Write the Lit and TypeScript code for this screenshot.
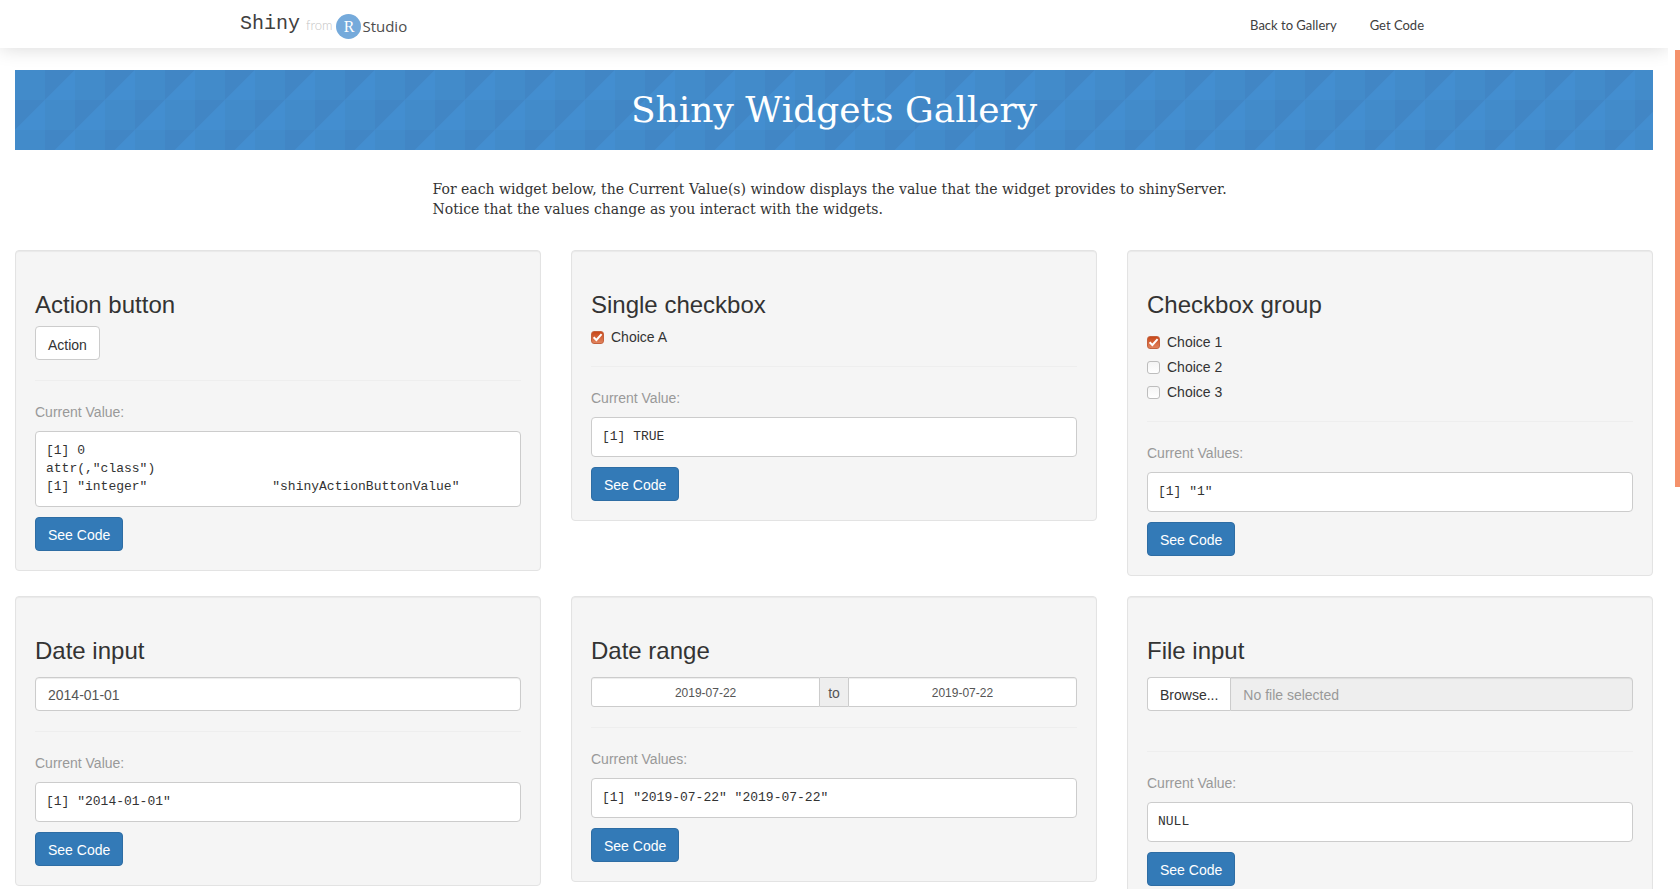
import { LitElement, html, css, svg, TemplateResult } from "lit";
import { customElement, property, state } from "lit/decorators.js";

const controls = css`
  *, *::before, *::after { box-sizing: border-box; }
  button, input { font: inherit; margin: 0; }
`;

@customElement("widget-card")
class WidgetCard extends LitElement {
  @property() heading = "";
  @property() caption = "Current Value:";
  @property() output = "";

  static styles = [controls, css`
    :host {
      display: block;
      box-sizing: border-box;
      min-width: 0;
      padding: 41px 19px 19px;
      border: 1px solid #e3e3e3;
      border-radius: 4px;
      background: #f5f5f5;
      box-shadow: inset 0 1px 1px rgba(0, 0, 0, 0.05);
    }
    .heading { margin: 0 0 8px; font-size: 24px; line-height: 26px; font-weight: 400; }
    .rule { height: 1px; margin: 20px 0 21px; border: 0; background: #eee; }
    .caption { margin: 0 0 9px; color: #999; }
    .output {
      margin: 0 0 10px;
      padding: 10px;
      border: 1px solid #ccc;
      border-radius: 4px;
      background: #fff;
      color: #333;
      font: 13px/18px "Liberation Mono", monospace;
      overflow: auto;
    }
    .code {
      height: 34px;
      padding: 2px 12px 0;
      border: 1px solid #2e6da4;
      border-radius: 4px;
      background: #337ab7;
      color: #fff;
      cursor: pointer;
    }
  `];

  render() {
    return html`
      <h3 class="heading">${this.heading}</h3>
      <slot></slot>
      <hr class="rule" />
      <p class="caption">${this.caption}</p>
      <pre class="output">${this.output}</pre>
      <button class="code" type="button">See Code</button>
    `;
  }
}

@customElement("app-root")
class AppRoot extends LitElement {
  @state() private clicks = 0;
  @state() private single = true;
  @state() private group = [true, false, false];
  @state() private date = "2014-01-01";
  @state() private from = "2019-07-22";
  @state() private to = "2019-07-22";

  static styles = [controls, css`
    :host {
      display: block;
      box-sizing: border-box;
      height: 100vh;
      padding-right: 12px;
      overflow-y: auto;
      scrollbar-width: none;
      background: #fff;
      color: #333;
      font: 14px/20px "Liberation Sans", Arial, sans-serif;
    }
    .topbar {
      background: #fff;
      box-shadow: 0 0 20px rgba(0, 0, 0, 0.16);
      clip-path: inset(0 0 -24px 0);
    }
    .topbar-inner {
      display: flex;
      justify-content: space-between;
      align-items: center;
      max-width: 1188px;
      height: 48px;
      margin: 0 auto;
      padding-right: 4px;
    }
    .brand { display: flex; align-items: center; color: #404040; text-decoration: none; }
    .shiny { font: 20px/24px "Liberation Mono", monospace; }
    .from { margin: 2px 4px 0 6px; color: #c4c4c4; font: 300 13px/20px Lato, sans-serif; }
    .badge { width: 25px; height: 25px; margin-top: 4px; }
    .badge-disc { fill: #75aadb; }
    .badge-letter { fill: #fff; font: 16px "Liberation Serif", serif; text-anchor: middle; }
    .studio { margin: 4px 0 0 1px; color: #4d4d4d; font: 15px/20px "Open Sans", sans-serif; }
    .nav { display: flex; gap: 33px; font: 13px/20px Lato, sans-serif; padding-top: 2px; }
    .nav-link { color: #404040; text-decoration: none; }

    .page { padding: 22px 15px 20px; }
    .banner { position: relative; background: #428bca; color: #fff; text-align: center; }
    .weave { display: block; position: absolute; inset: 0; width: 100%; height: 100%; }
    .dark { fill: #4186c5; }
    .light { fill: #438ed0; }
    .title {
      position: relative;
      margin: 0;
      padding: 20px 0;
      font: 400 36px/40px "DejaVu Serif", serif;
    }
    .intro {
      margin: 29px 0 31px;
      padding-left: calc(25% + 8px);
      font: 14px/20px "DejaVu Serif", serif;
    }
    .gallery {
      display: grid;
      grid-template-columns: repeat(3, minmax(0, 1fr));
      gap: 20px 30px;
      align-items: start;
    }

    .action {
      display: block;
      height: 34px;
      padding: 4px 12px 0;
      border: 1px solid #ccc;
      border-radius: 4px;
      background: #fff;
      color: #333;
      cursor: pointer;
    }
    .choices { display: grid; gap: 5px; padding-top: 5px; }
    .choice { display: flex; gap: 7px; height: 20px; padding-top: 1px; cursor: pointer; }
    .tick {
      appearance: none;
      flex: none;
      width: 13px;
      height: 13px;
      margin-top: 4px;
      border: 1px solid #bdbdbd;
      border-radius: 3px;
      background: linear-gradient(#f4f4f4, #fff);
    }
    .tick:checked {
      border-color: #c4623e;
      background:
        url("data:image/svg+xml,%3Csvg xmlns='http://www.w3.org/2000/svg' viewBox='0 0 11 11'%3E%3Cpath d='M1.6 5.2L4.4 8 9.6 2.2' fill='none' stroke='white' stroke-width='2'/%3E%3C/svg%3E") center / 11px 11px no-repeat,
        linear-gradient(#c8481a, #e2845e);
    }
    .field { display: flex; padding-top: 5px; }
    .text {
      flex: 1;
      min-width: 0;
      height: 34px;
      padding: 7px 12px 5px;
      border: 1px solid #ccc;
      border-radius: 4px;
      background: #fff;
      box-shadow: inset 0 1px 1px rgba(0, 0, 0, 0.075);
      color: #555;
    }
    .small { height: 30px; padding: 6px 10px 4px; font-size: 12px; text-align: center; border-radius: 3px; }
    .start { border-radius: 3px 0 0 3px; }
    .end { border-radius: 0 3px 3px 0; }
    .addon {
      padding: 5px 8px 3px;
      border: solid #ccc;
      border-width: 1px 0;
      background: #eee;
      color: #555;
    }
    .browse {
      height: 34px;
      padding: 7px 12px 5px;
      border: 1px solid #ccc;
      border-right: 0;
      border-radius: 4px 0 0 4px;
      background: #fff;
      cursor: pointer;
    }
    .file { position: absolute; width: 1px; height: 1px; opacity: 0; }
    .filename { border-radius: 0 4px 4px 0; background: #eee; }
    .filename::placeholder { color: #999; }
    .upload { padding-bottom: 20px; }
    .thumb {
      position: fixed;
      top: 50px;
      right: 0;
      width: 5px;
      height: calc(50vh - 8px);
      background: #f5926c;
    }
  `];

  private get banner(): TemplateResult {
    return html`
      <svg class="weave" aria-hidden="true">
        <defs>
          <pattern id="weave" width="60" height="60" patternUnits="userSpaceOnUse">
            ${svg`
              <path class="dark" d="M30 0H60L30 30ZM0 30H30L0 60Z" />
              <path class="light" d="M60 0V30H30ZM30 30V60H0Z" />
            `}
          </pattern>
        </defs>
        <rect width="100%" height="100%" fill="url(#weave)" />
      </svg>
    `;
  }

  private choice(label: string, checked: boolean, update: (on: boolean) => void) {
    return html`
      <label class="choice">
        <input class="tick" type="checkbox" .checked=${checked}
          @change=${(e: Event) => update((e.target as HTMLInputElement).checked)} />
        <span>${label}</span>
      </label>
    `;
  }

  private value(e: Event) {
    return (e.target as HTMLInputElement).value;
  }

  private get groupOutput() {
    const picked = this.group.flatMap((on, i) => (on ? [`"${i + 1}"`] : []));
    return picked.length ? `[1] ${picked.join(" ")}` : "NULL";
  }

  render() {
    const classes = `[1] ${'"integer"'.padEnd(24)} "shinyActionButtonValue"`;
    return html`
      <header class="topbar">
        <div class="topbar-inner">
          <a class="brand" href="#">
            <span class="shiny">Shiny</span>
            <span class="from">from</span>
            <svg class="badge" viewBox="0 0 25 25">
              <circle class="badge-disc" cx="12.5" cy="12.5" r="12.5" />
              <text class="badge-letter" x="13" y="18">R</text>
            </svg>
            <span class="studio">Studio</span>
          </a>
          <nav class="nav">
            <a class="nav-link" href="#">Back to Gallery</a>
            <a class="nav-link" href="#">Get Code</a>
          </nav>
        </div>
      </header>

      <main class="page">
        <div class="banner">
          ${this.banner}
          <h1 class="title">Shiny Widgets Gallery</h1>
        </div>
        <p class="intro">
          For each widget below, the Current Value(s) window displays the value that the widget provides to shinyServer.<br />
          Notice that the values change as you interact with the widgets.
        </p>

        <div class="gallery">
          <widget-card heading="Action button" .output=${`[1] ${this.clicks}\nattr(,"class")\n${classes}`}>
            <button class="action" type="button" @click=${() => this.clicks++}>Action</button>
          </widget-card>

          <widget-card heading="Single checkbox" .output=${`[1] ${this.single ? "TRUE" : "FALSE"}`}>
            ${this.choice("Choice A", this.single, (on) => (this.single = on))}
          </widget-card>

          <widget-card heading="Checkbox group" caption="Current Values:" .output=${this.groupOutput}>
            <div class="choices">
              ${this.group.map((checked, i) =>
                this.choice(`Choice ${i + 1}`, checked, (on) => {
                  this.group = this.group.map((old, j) => (j === i ? on : old));
                }))}
            </div>
          </widget-card>

          <widget-card heading="Date input" .output=${`[1] "${this.date}"`}>
            <div class="field">
              <input class="text" type="text" aria-label="Date input" .value=${this.date}
                @change=${(e: Event) => (this.date = this.value(e))} />
            </div>
          </widget-card>

          <widget-card heading="Date range" caption="Current Values:" .output=${`[1] "${this.from}" "${this.to}"`}>
            <div class="field">
              <input class="text small start" type="text" aria-label="Start date" .value=${this.from}
                @change=${(e: Event) => (this.from = this.value(e))} />
              <span class="addon">to</span>
              <input class="text small end" type="text" aria-label="End date" .value=${this.to}
                @change=${(e: Event) => (this.to = this.value(e))} />
            </div>
          </widget-card>

          <widget-card heading="File input" output="NULL">
            <div class="field upload">
              <label class="browse">Browse...<input class="file" type="file" /></label>
              <input class="text filename" type="text" aria-label="Selected file" placeholder="No file selected" readonly />
            </div>
          </widget-card>
        </div>
      </main>
      <div class="thumb"></div>
    `;
  }
}
